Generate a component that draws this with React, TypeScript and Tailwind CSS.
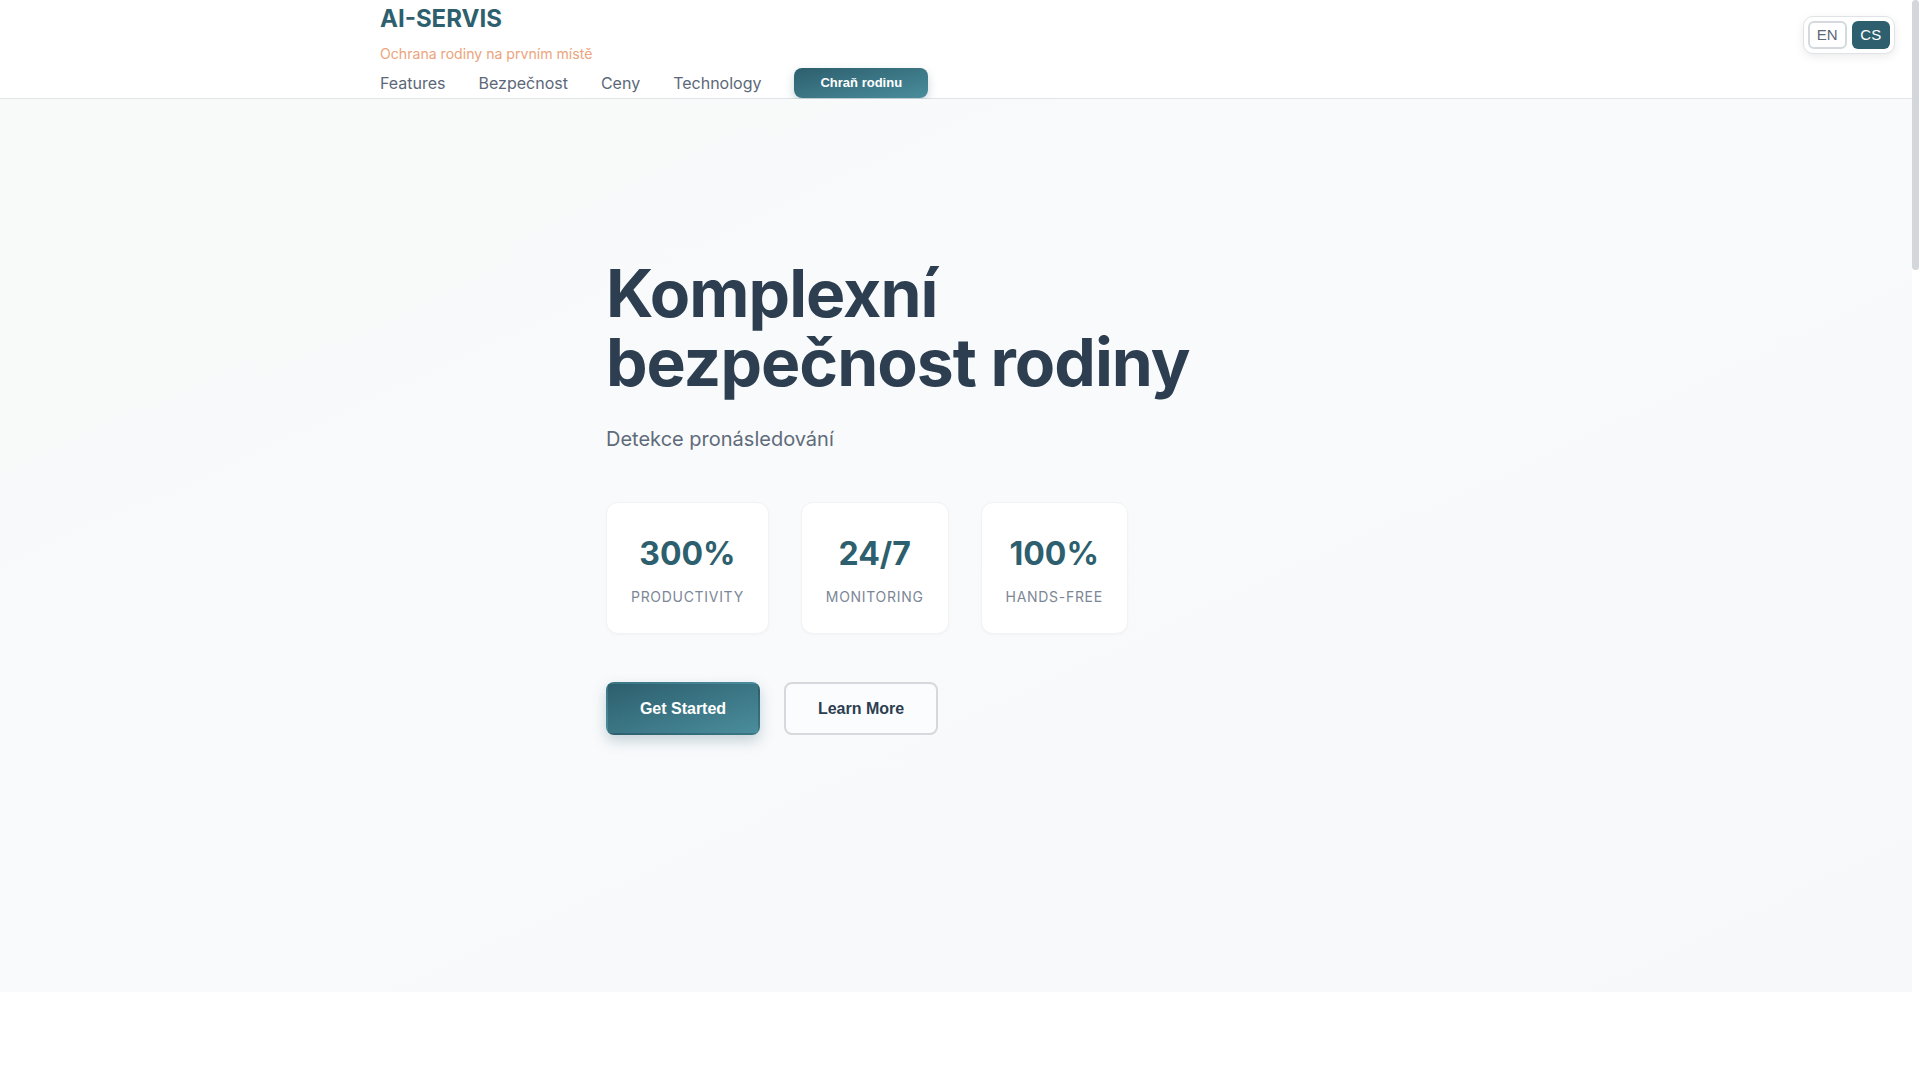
import React from "react";

const inter = { fontFamily: "Inter, 'Noto Sans', sans-serif" };

export default function App() {
  return (
    <div className="flex w-[1920px] h-[1080px] overflow-hidden bg-white" style={inter}>
      <div className="w-[1912px] h-[1080px] flex flex-col relative">
        <header className="bg-white border-b border-[#e2e5e8] h-[99px] shrink-0">
          <div className="max-w-6xl mx-auto pt-[3px] flex flex-col">
            <div className="text-[24px] leading-[32px] font-bold text-[#2d5f6e]">AI-SERVIS</div>
            <div className="mt-[9px] text-[14.1px] leading-[20px] text-[#eba47d]">Ochrana rodiny na prvním místě</div>
            <nav className="mt-[4px] flex items-center gap-[33px] h-[30px]">
              <a className="text-[16px] leading-[24px] text-[#5b6878]">Features</a>
              <a className="text-[16px] leading-[24px] text-[#5b6878]">Bezpečnost</a>
              <a className="text-[16px] leading-[24px] text-[#5b6878]">Ceny</a>
              <a className="text-[16px] leading-[24px] text-[#5b6878]">Technology</a>
              <button
                className="h-[30px] px-[26px] rounded-lg text-white text-[13px] font-bold bg-gradient-to-br from-[#2d5f6e] to-[#4a8d9c] shadow-[0_4px_10px_rgba(45,95,110,0.25)]"
                style={{ fontFamily: "'Liberation Sans', Arial, sans-serif" }}
              >
                Chraň rodinu
              </button>
            </nav>
          </div>
        </header>

        <section className="h-[893px] shrink-0 bg-gradient-to-br from-[#f8faf9] via-[#f9fafc] to-[#f7f8fa]">
          <div className="max-w-[700px] mx-auto pt-[160px]">
            <h1 className="text-[66px] leading-[69px] font-bold text-[#2c3e50] tracking-[-0.015em]">
              Komplexní
              <br />
              bezpečnost rodiny
            </h1>
            <p className="mt-[28px] text-[20px] leading-[28px] text-[#5f6b7a]">Detekce pronásledování</p>

            <div className="mt-[49px] flex gap-8">
              {[
                ["300%", "PRODUCTIVITY"],
                ["24/7", "MONITORING"],
                ["100%", "HANDS-FREE"],
              ].map(([n, l]) => (
                <div
                  key={l}
                  className="bg-white rounded-xl border border-[#f1f3f5] shadow-[0_1px_3px_rgba(0,0,0,0.03)] px-6 pt-[31px] pb-[26px] flex flex-col items-center"
                >
                  <div className="text-[32px] leading-[40px] font-bold text-[#2d5f6e]">{n}</div>
                  <div className="mt-[13px] text-[14px] leading-[20px] tracking-[0.05em] text-[#7b8796]">{l}</div>
                </div>
              ))}
            </div>

            <div className="mt-[48px] flex gap-6" style={{ fontFamily: "'Liberation Sans', Arial, sans-serif" }}>
              <button className="h-[53px] w-[154px] rounded-lg border-2 border-transparent text-white text-[16px] font-bold bg-gradient-to-br from-[#2d5f6e] to-[#4a8d9c] shadow-[0_6px_14px_rgba(45,95,110,0.25)]">
                Get Started
              </button>
              <button className="h-[53px] w-[154px] rounded-lg border-2 border-[#d5d9dd] bg-[#fbfcfd] text-[#2c3e50] text-[16px] font-bold">
                Learn More
              </button>
            </div>
          </div>
        </section>

        <div className="flex-1 bg-white" />

        <div
          className="absolute top-[16px] left-[1803px] w-[92px] h-[38px] rounded-[10px] bg-white border border-[#dfe3e6] shadow-[0_3px_10px_rgba(0,0,0,0.08)] flex items-center gap-[5px] px-[4px]"
          style={{ fontFamily: "'Liberation Sans', Arial, sans-serif" }}
        >
          <button className="w-[39px] h-[28px] rounded-md border-2 border-[#d5d9dd] text-[15px] text-[#5b6878] bg-white">EN</button>
          <button className="w-[39px] h-[28px] rounded-md bg-[#2d5f6e] text-[15px] text-white">CS</button>
        </div>
      </div>
      <div className="w-[8px] h-[1080px] bg-white">
        <div className="h-[270px] w-[7px] rounded-full bg-[#d3d7db]" />
      </div>
    </div>
  );
}
